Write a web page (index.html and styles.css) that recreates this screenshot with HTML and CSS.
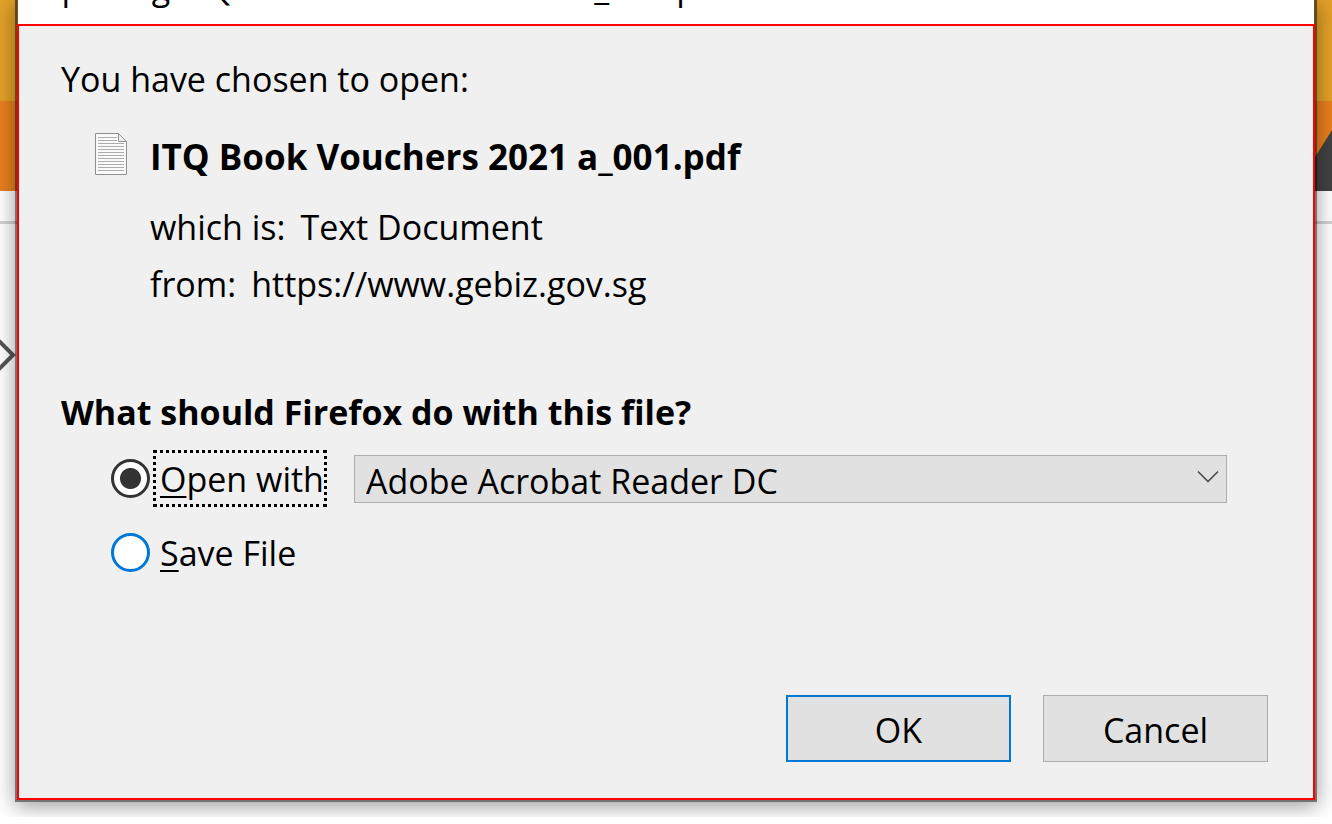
FILE: index.html
```html
<!DOCTYPE html>
<html lang="en">
<head>
<meta charset="utf-8">
<title>Opening ITQ Book Vouchers 2021 a_001.pdf</title>
<link rel="stylesheet" href="styles.css">
</head>
<body>
<div class="screen">
  <div class="backdrop" aria-hidden="true">
    <div class="band band-gold"></div>
    <div class="band band-orange">
      <svg class="slope" width="20" height="90" viewBox="0 0 20 90"><path d="M20 29L0 61V90H20Z" fill="#424242"/></svg>
    </div>
    <div class="rule"></div>
    <svg class="next" width="17" height="34" viewBox="0 0 17 34"><path d="M-1 3L13 17L-1 31" fill="none" stroke="#555" stroke-width="4"/></svg>
  </div>
  <main class="dialog">
    <header class="titlebar"><h1 class="title">Opening ITQ Book Vouchers 2021 a_001.pdf</h1></header>
    <form class="content">
      <p class="intro">You have chosen to open:</p>
      <section class="file">
        <svg class="file-icon" width="32" height="42" viewBox="0 0 32 42">
          <path d="M.5 .5H23.500L31.500 8.500V41.500H.5Z" fill="#fafafa" stroke="#8c8e90"/>
          <path d="M3 4.500H22M3 7.500H22M3 10.500H29M3 13.500H29M3 16.500H29M3 19.500H29M3 22.500H29M3 25.500H29M3 28.500H29M3 31.500H29M3 34.500H29M3 37.500H29" stroke="#adadad"/>
          <path d="M23.500 .5V8.500H31.500Z" fill="#ededed" stroke="#929496"/>
        </svg>
        <div class="details">
          <h2 class="name">ITQ Book Vouchers 2021 a_001.pdf</h2>
          <p class="detail"><span>which is:</span><span class="value">Text Document</span></p>
          <p class="detail"><span>from:</span><span class="value">https://www.gebiz.gov.sg</span></p>
        </div>
      </section>
      <fieldset class="choices">
        <legend class="question">What should Firefox do with this file?</legend>
        <div class="choice">
          <input class="radio" type="radio" name="action" id="open" checked>
          <label class="label label-focus" for="open"><span class="key">O</span>pen with</label>
          <div class="picker">
            <select class="select" aria-label="Application"><option>Adobe Acrobat Reader DC</option></select>
            <svg class="arrow" width="22" height="14" viewBox="0 0 22 14"><path d="M1 1.500L11 11.500L21 1.500" fill="none" stroke="#444" stroke-width="1.500"/></svg>
          </div>
        </div>
        <div class="choice">
          <input class="radio" type="radio" name="action" id="save">
          <label class="label" for="save"><span class="key">S</span>ave File</label>
        </div>
      </fieldset>
      <div class="actions">
        <button class="button button-default" type="button">OK</button>
        <button class="button" type="button">Cancel</button>
      </div>
    </form>
  </main>
</div>
</body>
</html>
```
FILE: styles.css
```css
* { box-sizing: border-box; }
body {
  margin: 0;
  background: #fff;
  color: #000;
  font: 34px/48px "Open Sans", "Noto Sans", sans-serif;
}
h1, h2, p { margin: 0; font-size: inherit; }
button, select { font: inherit; color: inherit; }

.screen { position: relative; overflow: hidden; padding: 0 15px 15px; }
.backdrop { position: absolute; inset: 0; background: #fff; }
.band-gold { height: 101px; background: #e3a128; }
.band-orange { height: 90px; background: #e97f1f; display: flex; justify-content: flex-end; }
.rule { height: 3px; margin-top: 30px; background: #d2d2d2; }
.next { display: block; margin-top: 114px; }

.dialog {
  position: relative;
  border: solid rgba(0, 0, 0, .55);
  border-width: 0 2px 2px;
  box-shadow: 0 4px 20px rgba(0, 0, 0, .4);
}
.titlebar {
  display: flex;
  align-items: flex-end;
  height: 24px;
  padding: 0 17px 13px;
  margin: 0 1px;
  overflow: hidden;
  background: #fff;
  box-shadow: 0 0 0 1px #6b5227;
}
.title { font-weight: 400; white-space: nowrap; }

.content {
  position: relative;
  border: 2px solid #f00;
  background: #f0f0f0;
  padding: 29px 45px 36px 42px;
}
.file { display: flex; gap: 23px; margin: 30px 0 0 34px; }
.file-icon { flex: none; }
.name { font-size: 35px; font-weight: 700; margin-bottom: 22px; }
.detail { display: flex; gap: 15px; margin-bottom: 9px; }

.choices { border: 0; margin: 71px 0 0; padding: 0 41px 0 50px; }
.question { font-weight: 700; padding: 0; margin-left: -50px; }
.choice { display: flex; align-items: center; margin-top: 17px; }
.question + .choice { margin-top: 14px; }
.radio {
  appearance: none;
  flex: none;
  width: 39px;
  height: 39px;
  margin: 0 3px 0 0;
  border: 3px solid #0078d7;
  border-radius: 50%;
  background: #fff;
}
.radio:checked { border-color: #333; background: radial-gradient(circle, #333 10px, #fff 11px); }
.label { flex: none; border: 3px dotted transparent; padding: 2px 0 1px 4px; }
.label-focus { border-color: #000; }
.key { text-decoration: underline; text-decoration-thickness: 2px; text-underline-offset: 4px; text-decoration-skip-ink: none; }
.picker { position: relative; flex: 1; margin-left: 27px; }
.select {
  appearance: none;
  display: block;
  width: 100%;
  height: 48px;
  padding: 2px 40px 0 11px;
  line-height: 46px;
  border: 1px solid #adadad;
  border-radius: 0;
  background: #e1e1e1;
}
.arrow { position: absolute; right: 8px; top: 15px; pointer-events: none; }

.actions { display: flex; justify-content: flex-end; gap: 32px; margin-top: 114px; }
.button { width: 225px; height: 67px; padding: 2px 0 0; border: 1px solid #adadad; background: #e1e1e1; }
.button-default { border: 2px solid #0078d7; }
```
